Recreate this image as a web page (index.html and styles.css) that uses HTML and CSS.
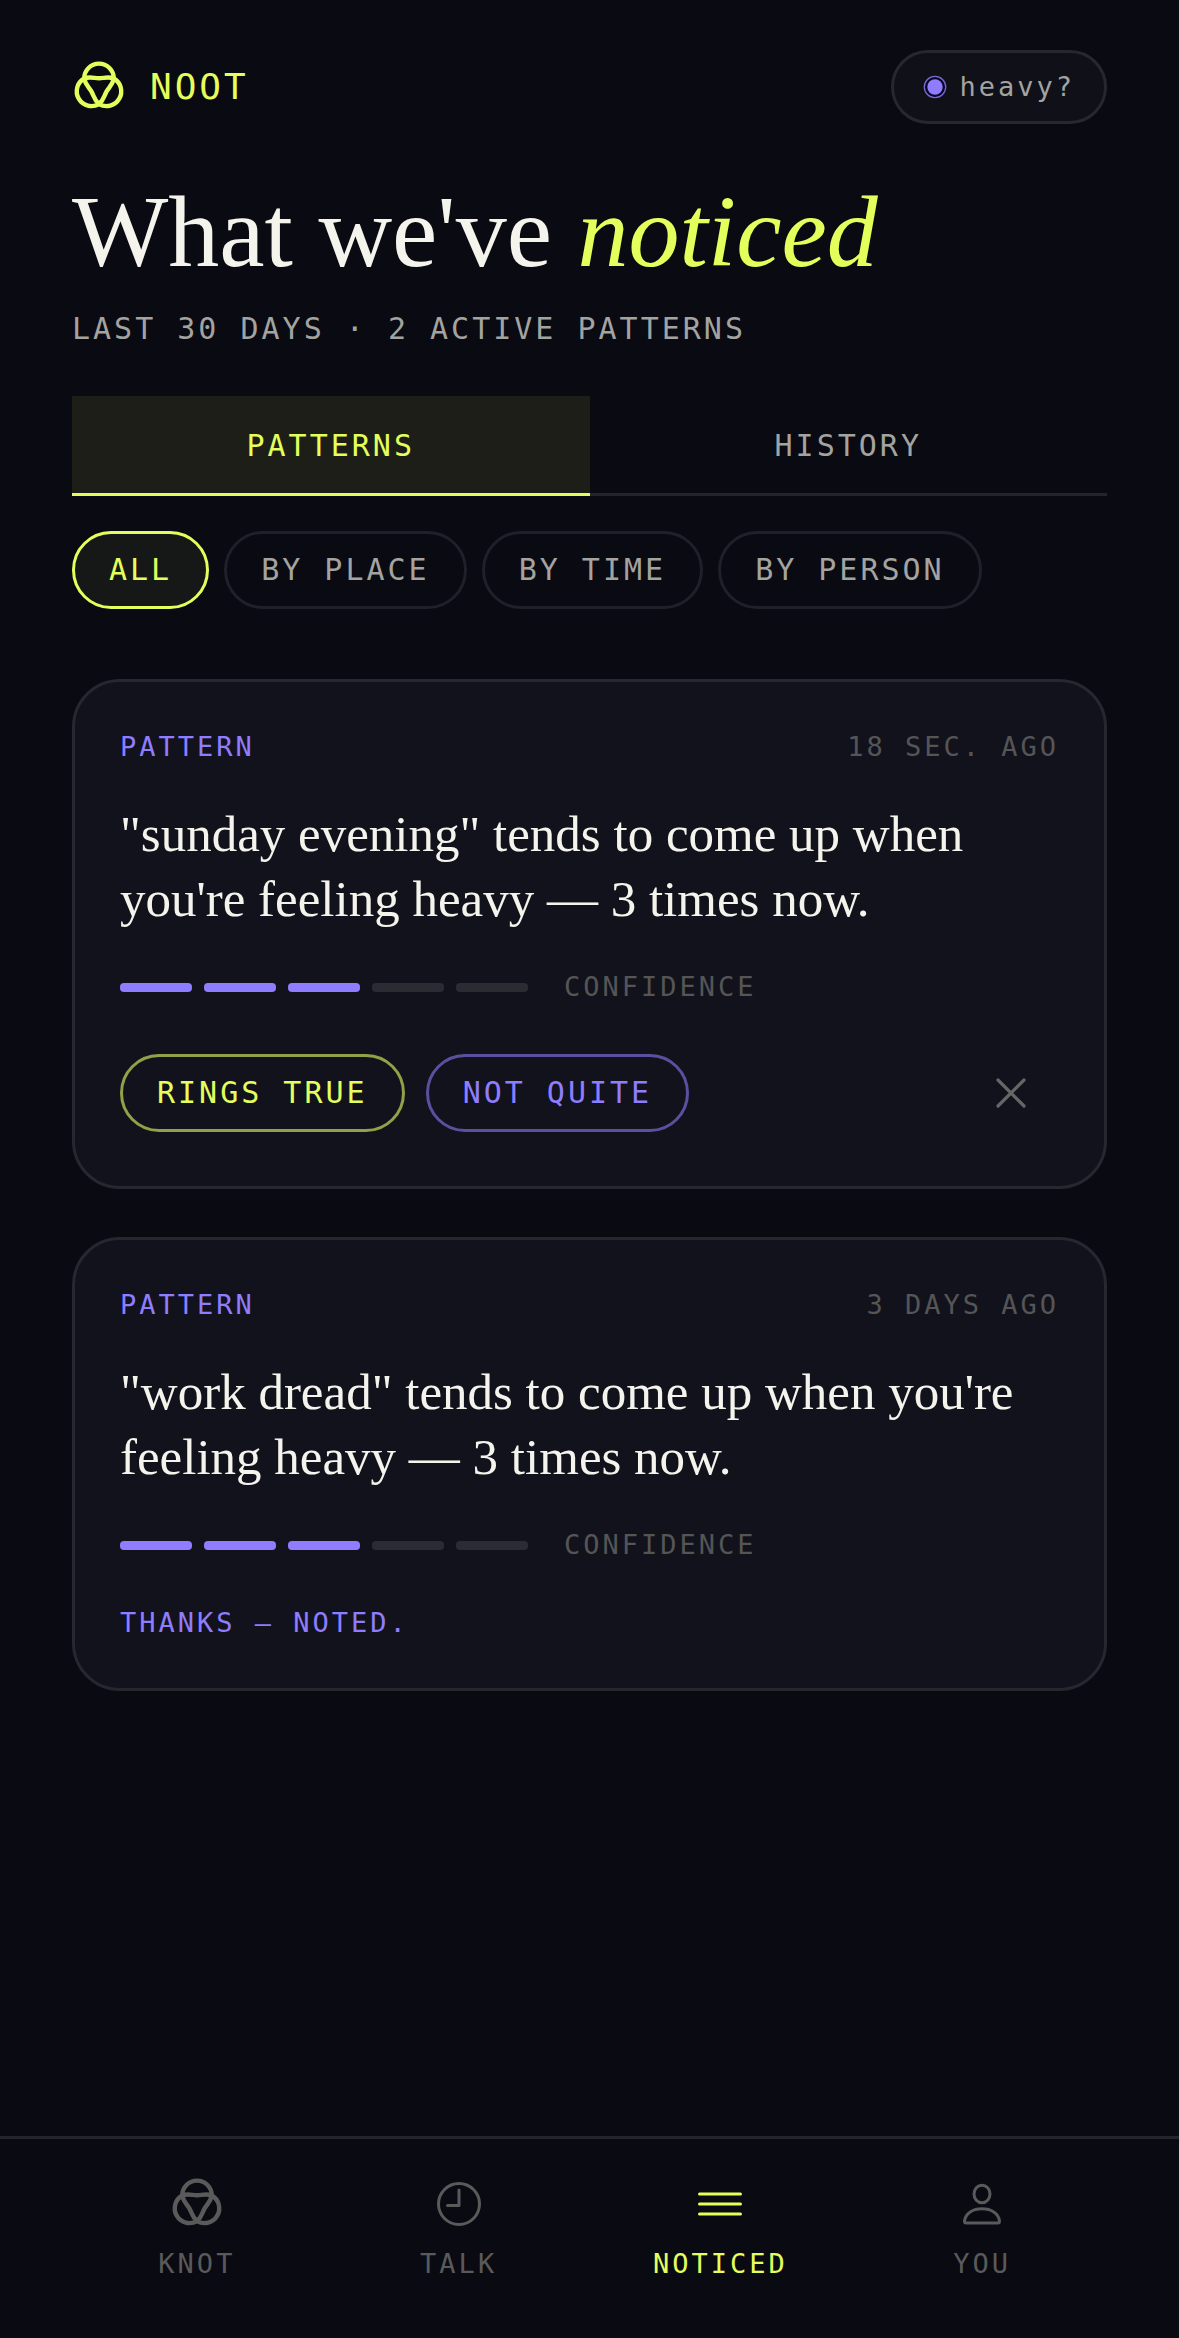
FILE: index.html
```html
<!DOCTYPE html>
<html lang="en">
<head>
  <meta charset="UTF-8" />
  <meta name="viewport" content="width=device-width, initial-scale=1.0" />
  <title>Noot</title>
  <link rel="stylesheet" href="styles.css">
</head>
<body>
  <!-- knot symbol, used in the header and the nav -->
  <svg class="symbols" width="0" height="0" aria-hidden="true">
    <symbol id="knot" viewBox="-27 -27 54 54">
      <g fill="none" stroke="currentColor" stroke-width="4.4" stroke-linecap="round" stroke-linejoin="round">
        <path d="M-14.8 -8.6 A14.8 14.8 0 0 1 14.8 -8.6 C9 -10.6 5 -8.8 0 -8.8 C-5 -8.8 -9 -10.6 -14.8 -8.6" />
        <path transform="rotate(120)" d="M-14.8 -8.6 A14.8 14.8 0 0 1 14.8 -8.6 C9 -10.6 5 -8.8 0 -8.8 C-5 -8.8 -9 -10.6 -14.8 -8.6" />
        <path transform="rotate(240)" d="M-14.8 -8.6 A14.8 14.8 0 0 1 14.8 -8.6 C9 -10.6 5 -8.8 0 -8.8 C-5 -8.8 -9 -10.6 -14.8 -8.6" />
      </g>
    </symbol>
  </svg>

  <header class="header">
    <a class="brand" href="#">
      <svg class="brand-icon"><use href="#knot" /></svg>
      <span>NOOT</span>
    </a>
    <button class="mood" type="button">
      <svg class="mood-dot" viewBox="0 0 24 24">
        <circle class="mood-ring" cx="12" cy="12" r="10.7" />
        <circle class="mood-core" cx="12" cy="12" r="7.7" />
      </svg>
      <span>heavy?</span>
    </button>
  </header>

  <main class="main">
    <h1>What we've <em>noticed</em></h1>
    <p class="subtitle">LAST 30 DAYS · 2 ACTIVE PATTERNS</p>

    <div class="tabs">
      <button class="tab active" type="button">PATTERNS</button>
      <button class="tab" type="button">HISTORY</button>
    </div>

    <div class="filters">
      <button class="pill selected" type="button">ALL</button>
      <button class="pill" type="button">BY PLACE</button>
      <button class="pill" type="button">BY TIME</button>
      <button class="pill" type="button">BY PERSON</button>
    </div>

    <div class="cards">
      <article class="card">
        <div class="card-head">
          <span class="kind">PATTERN</span>
          <span class="faint">18 SEC. AGO</span>
        </div>
        <p class="quote">"sunday evening" tends to come up when you're feeling heavy — 3 times now.</p>
        <div class="confidence">
          <div class="bars">
            <i class="bar on"></i><i class="bar on"></i><i class="bar on"></i><i class="bar"></i><i class="bar"></i>
          </div>
          <span class="faint">CONFIDENCE</span>
        </div>
        <div class="actions">
          <button class="pill yes" type="button">RINGS TRUE</button>
          <button class="pill no" type="button">NOT QUITE</button>
          <button class="dismiss" type="button" aria-label="Dismiss">
            <svg viewBox="0 0 30 30"><path d="M2 2 L28 28 M28 2 L2 28" /></svg>
          </button>
        </div>
      </article>

      <article class="card">
        <div class="card-head">
          <span class="kind">PATTERN</span>
          <span class="faint">3 DAYS AGO</span>
        </div>
        <p class="quote">"work dread" tends to come up when you're feeling heavy — 3 times now.</p>
        <div class="confidence">
          <div class="bars">
            <i class="bar on"></i><i class="bar on"></i><i class="bar on"></i><i class="bar"></i><i class="bar"></i>
          </div>
          <span class="faint">CONFIDENCE</span>
        </div>
        <p class="thanks">THANKS — NOTED.</p>
      </article>
    </div>
  </main>

  <nav class="nav">
    <a class="nav-item" href="#">
      <svg class="nav-icon" viewBox="-30 -30 60 60"><use href="#knot" x="-27" y="-27" width="54" height="54" /></svg>
      <span>KNOT</span>
    </a>
    <a class="nav-item" href="#">
      <svg class="nav-icon" viewBox="0 0 60 60">
        <circle cx="30" cy="30" r="20.5" />
        <path d="M30 16 V31.5 H18.5" />
      </svg>
      <span>TALK</span>
    </a>
    <a class="nav-item current" href="#">
      <svg class="nav-icon" viewBox="0 0 60 60">
        <path d="M9.5 20 H50.5 M9.5 30 H50.5 M9.5 40 H50.5" />
      </svg>
      <span>NOTICED</span>
    </a>
    <a class="nav-item" href="#">
      <svg class="nav-icon" viewBox="0 0 60 60">
        <ellipse cx="30" cy="20" rx="8" ry="8.8" />
        <path d="M14 49 Q12.5 49 12.5 47 C13.5 39 21 34.8 30 34.8 C39 34.8 46.5 39 47.5 47 Q47.5 49 46 49 Z" />
      </svg>
      <span>YOU</span>
    </a>
  </nav>
</body>
</html>
```
FILE: styles.css
```css
* {
  box-sizing: border-box;
}
body {
  margin: 0;
  min-height: 100vh;
  display: flex;
  flex-direction: column;
  background-color: #0a0a12;
  color: #f4f3ec;
  font-family: "DejaVu Sans Mono", monospace;
  font-size: 27px;
  line-height: 40px;
  letter-spacing: 3px;
}
h1, p {
  margin: 0;
}
a {
  color: inherit;
  text-decoration: none;
}
button {
  font: inherit;
  letter-spacing: inherit;
  color: inherit;
  background: none;
  border: none;
  padding: 0;
  cursor: pointer;
}
.symbols {
  position: absolute;
}

/* header */
.header {
  display: flex;
  justify-content: space-between;
  align-items: center;
  padding: 50px 72px 0;
}
.brand {
  display: flex;
  align-items: center;
  gap: 24px;
  color: #e4ff5c;
  font-size: 36px;
}
.brand-icon {
  width: 54px;
  height: 54px;
}
.mood {
  display: flex;
  align-items: center;
  gap: 12px;
  height: 74px;
  padding: 0 29px;
  border: 3px solid #27272f;
  border-radius: 37px;
  background-color: #101018;
  color: #a3a3a0;
}
.mood-dot {
  width: 24px;
  height: 24px;
}
.mood-ring {
  fill: #0a0524;
  stroke: #7a6ad8;
  stroke-width: 1.3;
}
.mood-core {
  fill: #8f7dff;
}

/* page */
.main {
  padding: 52px 72px 72px;
}
h1 {
  font-family: "Liberation Serif", serif;
  font-size: 102px;
  line-height: 112px;
  font-weight: 400;
  letter-spacing: normal;
}
h1 em {
  color: #e4ff5c;
}
.subtitle {
  margin-top: 21px;
  font-size: 30px;
  color: #a3a3a0;
}
.tabs {
  display: flex;
  margin-top: 47px;
}
.tab {
  flex: 1;
  height: 100px;
  padding-top: 3px;
  border-bottom: 3px solid #24242c;
  font-size: 30px;
  color: #a3a3a0;
}
.tab.active {
  background-color: #1e1e19;
  border-color: #e4ff5c;
  color: #e4ff5c;
}
.filters {
  display: flex;
  flex-wrap: wrap;
  gap: 15px;
  margin-top: 35px;
}
.pill {
  height: 78px;
  padding: 0 34px;
  border: 3px solid #20202a;
  border-radius: 39px;
  font-size: 30px;
  color: #a3a3a0;
  white-space: nowrap;
}
.pill.selected {
  background-color: #151816;
  border-color: #e4ff5c;
  color: #e4ff5c;
}

/* cards */
.cards {
  display: flex;
  flex-direction: column;
  gap: 48px;
  margin-top: 70px;
}
.card {
  padding: 45px;
  border: 3px solid #27272f;
  border-radius: 48px;
  background-color: #12121c;
}
.card-head {
  display: flex;
  justify-content: space-between;
}
.kind, .thanks {
  color: #8f7dff;
}
.faint {
  color: #555556;
}
.quote {
  margin: 35px 0;
  font-family: "Liberation Serif", serif;
  font-size: 51px;
  line-height: 65px;
  letter-spacing: normal;
}
.confidence {
  display: flex;
  align-items: center;
  gap: 36px;
  margin-bottom: 38px;
}
.bars {
  display: flex;
  gap: 12px;
}
.bar {
  width: 72px;
  height: 9px;
  border-radius: 4px;
  background-color: #2b2b34;
}
.bar.on {
  background-color: #8f7dff;
}
.actions {
  display: flex;
  align-items: center;
  gap: 21px;
}
.pill.yes {
  border-color: #93a047;
  color: #e4ff5c;
}
.pill.no {
  border-color: #5b509f;
  color: #8f7dff;
}
.dismiss {
  display: flex;
  align-items: center;
  justify-content: center;
  width: 96px;
  height: 96px;
  margin-left: auto;
}
.dismiss svg {
  width: 30px;
  height: 30px;
  stroke: #666666;
  stroke-width: 3.2;
  stroke-linecap: round;
}

/* bottom nav */
.nav {
  display: flex;
  margin-top: auto;
  padding: 35px 66px 54px;
  border-top: 3px solid #24242c;
}
.nav-item {
  flex: 1;
  display: flex;
  flex-direction: column;
  align-items: center;
  gap: 10px;
  color: #5a5a5a;
}
.nav-item.current {
  color: #e4ff5c;
}
.nav-icon {
  width: 60px;
  height: 60px;
  fill: none;
  stroke: currentColor;
  stroke-width: 3;
  stroke-linecap: round;
  stroke-linejoin: round;
}
```
